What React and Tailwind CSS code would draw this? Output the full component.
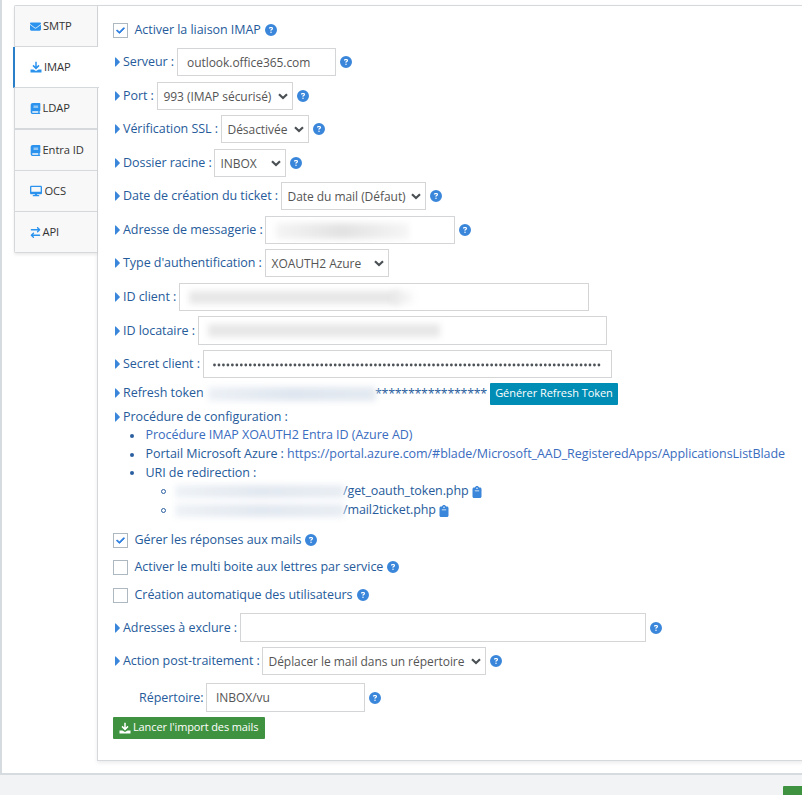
import React from "react";
import {
  FaEnvelope,
  FaBook,
  FaDesktop,
  FaArrowRightArrowLeft,
  FaCircleQuestion,
  FaClipboard,
  FaCheck,
} from "react-icons/fa6";

function DownloadIcon({ className = "" }) {
  return (
    <svg width="12" height="12" viewBox="0 0 12 12" className={`shrink-0 ${className}`}>
      <path
        d="M6 0.8 V7 M3 4.4 L6 7.4 L9 4.4"
        fill="none"
        stroke="currentColor"
        strokeWidth="1.5"
      />
      <path
        d="M0.5 8.4 H3.4 L6 10 L8.6 8.4 H11.5 V11.4 H0.5 Z"
        fill="currentColor"
      />
    </svg>
  );
}

const tabs = [
  { label: "SMTP", icon: FaEnvelope, cls: "h-[41px] border-b", gap: "gap-[2.5px]", size: 11 },
  { label: "IMAP", icon: DownloadIcon, cls: "h-[41px] border-b", gap: "gap-[2px]", size: 11, active: true },
  { label: "LDAP", icon: FaBook, cls: "h-[42px] border-b-2", gap: "gap-[2px]", size: 11 },
  { label: "Entra ID", icon: FaBook, cls: "h-[41px] border-b", gap: "gap-[2px]", size: 11 },
  { label: "OCS", icon: FaDesktop, cls: "h-[41px] border-b", gap: "gap-[3px]", size: 12 },
  { label: "API", icon: FaArrowRightArrowLeft, cls: "h-[40px]", gap: "gap-[2px]", size: 11 },
];

function Tab({ label, icon: Icon, cls, gap, size, active }) {
  return (
    <div
      className={`flex items-center border-[#d5d9dc] text-[11.2px] text-[#333] ${gap} ${cls} ${
        active
          ? "-ml-[2px] -mr-[2px] border-l-2 border-l-[#2a80c8] bg-white pl-[15px]"
          : "bg-[#f8f8f8] pl-[14.5px]"
      }`}
    >
      <Icon size={size} className="shrink-0 text-[#2b93ee]" />
      <span className="whitespace-nowrap">{label}</span>
    </div>
  );
}

function Help({ className = "ml-[3.5px]" }) {
  return <FaCircleQuestion size={12} className={`shrink-0 text-[#3a86da] ${className}`} />;
}

function Row({ className, label, labelClass, children }) {
  return (
    <div className={`flex items-center ${className}`}>
      <div className={`flex shrink-0 items-center whitespace-nowrap ${labelClass}`}>
        <svg width="10" height="10" viewBox="0 0 10 10" className="shrink-0 text-[#3a86da]">
          <path d="M2 0.5 H2.8 L6.6 4.5 V5.5 L2.8 9.5 H2 Z" fill="currentColor" />
        </svg>
        <span className="pt-px">{label}</span>
      </div>
      {children}
    </div>
  );
}

function Field({ className, children }) {
  return (
    <div
      className={`flex h-full shrink-0 items-center overflow-hidden whitespace-nowrap border border-[#d3d5d7] bg-white pl-[9px] pt-px text-[12px] text-[#555] ${className}`}
    >
      {children}
    </div>
  );
}

function Select({ className, children }) {
  return (
    <div
      className={`flex h-full shrink-0 items-center justify-between whitespace-nowrap border border-[#d3d5d7] bg-white pl-[5.5px] pr-[4px] text-[12px] text-[#555] ${className}`}
    >
      <span className="pt-[2px]">{children}</span>
      <svg width="10" height="7" viewBox="0 0 10 7" fill="none" className="shrink-0">
        <path d="M1 1.2 L5 5 L9 1.2" stroke="#4b5054" strokeWidth="2.2" />
      </svg>
    </div>
  );
}

function Check({ className, checked, label }) {
  return (
    <div className={`flex h-[15px] items-center ${className}`}>
      <div className="mr-[6.5px] flex size-[15px] shrink-0 items-center justify-center border border-[#adb8c0] bg-white">
        {checked && <FaCheck size={9} strokeWidth={50} stroke="currentColor" className="text-[#2f80e0]" />}
      </div>
      <span className="whitespace-nowrap">{label}</span>
      <Help className="mb-[2px] ml-[4px]" />
    </div>
  );
}

function Smudge({ className }) {
  return <div className={`shrink-0 blur-[3px] ${className}`} />;
}

function Dot() {
  return <span className="mr-[11.5px] size-[4px] shrink-0 rounded-full bg-[#2a5fa0]" />;
}

function Redirect({ path }) {
  return (
    <div className="flex h-[19px] items-center">
      <span className="mr-[9px] size-[5px] shrink-0 rounded-full border border-[#2a5fa0]" />
      <Smudge className="-mr-px h-[13px] w-[169px] bg-linear-to-r from-[#eef2f6] via-[#e2e8f0] to-[#e8edf3]" />
      <span>{path}</span>
      <FaClipboard size={12} className="ml-[2px] text-[#3a86da]" />
    </div>
  );
}

export default function App() {
  return (
    <div className="flex h-[795px] w-[802px] flex-col overflow-hidden bg-[#f1f3f5] font-['Open_Sans',sans-serif] text-[12.5px] tracking-[-0.05px] text-[#265b9b]">
      <div className="flex h-[775px] shrink-0 border-b-2 border-l-2 border-[#d5dbdf] bg-white pl-[12px] pt-[5px]">
        <nav className="z-10 h-[248px] w-[83px] shrink-0 rounded-l-[2px] border border-r-0 border-[#d5d9dc] tracking-[-0.1px] shadow-[0_2px_3px_rgba(0,0,0,0.08)]">
          {tabs.map((t) => (
            <Tab key={t.label} {...t} />
          ))}
        </nav>

        <main className="-mr-[10px] flex h-[756px] w-[720px] shrink-0 flex-col border border-[#d5d9dc] bg-white pl-[15px] shadow-[0_2px_4px_rgba(0,0,0,0.08)]">
          <Check className="mt-[17px]" checked label="Activer la liaison IMAP" />

          <Row className="mt-[10px] h-[28px]" label="Serveur :" labelClass="w-[64px]">
            <Field className="w-[159px]">outlook.office365.com</Field>
            <Help />
          </Row>
          <Row className="mt-[6px] h-[28px]" label="Port :" labelClass="w-[44px]">
            <Select className="w-[136px]">993 (IMAP sécurisé)</Select>
            <Help />
          </Row>
          <Row className="mt-[5px] h-[28px]" label="Vérification SSL :" labelClass="w-[108px]">
            <Select className="w-[88px]">Désactivée</Select>
            <Help />
          </Row>
          <Row className="mt-[6px] h-[28px]" label="Dossier racine :" labelClass="w-[101px]">
            <Select className="w-[72px]">INBOX</Select>
            <Help />
          </Row>
          <Row className="mt-[5px] h-[28px]" label="Date de création du ticket :" labelClass="w-[168px]">
            <Select className="w-[145px]">Date du mail (Défaut)</Select>
            <Help />
          </Row>
          <Row className="mt-[6px] h-[28px]" label="Adresse de messagerie :" labelClass="w-[152px]">
            <Field className="w-[190px]">
              <Smudge className="h-[16px] w-[134px] bg-linear-to-r from-[#f5f5f5] via-[#e2e2e2] to-[#f6f6f6]" />
            </Field>
            <Help />
          </Row>
          <Row className="mt-[5px] h-[28px]" label="Type d'authentification :" labelClass="w-[152px]">
            <Select className="w-[124px]">XOAUTH2 Azure</Select>
          </Row>
          <Row className="mt-[6px] h-[28px]" label="ID client :" labelClass="w-[66px]">
            <Field className="w-[410px]">
              <Smudge className="h-[13px] w-[210px] bg-[#e7e7e8]" />
              <Smudge className="-ml-[6px] h-[13px] w-[24px] bg-linear-to-r from-[#e7e7e8] to-white" />
            </Field>
          </Row>
          <Row className="mt-[5px] h-[29px]" label="ID locataire :" labelClass="w-[85px]">
            <Field className="w-[409px] pb-[2px]">
              <Smudge className="h-[13px] w-[232px] bg-[#e7e7e8]" />
            </Field>
          </Row>
          <Row className="mt-[5px] h-[28px]" label="Secret client :" labelClass="w-[90px]">
            <Field className="w-[409px] pr-[9px]">
              <svg width="390" height="4" className="shrink-0">
                <line x1="1.5" y1="2" x2="390" y2="2" stroke="#4d5358" strokeWidth="2.8" strokeLinecap="round" strokeDasharray="0 4.47" />
              </svg>
            </Field>
          </Row>

          <Row className="mt-[5px] h-[22px]" label="Refresh token" labelClass="w-[95px] relative -top-px">
            <Smudge className="-mr-px h-[14px] w-[168px] bg-linear-to-r from-[#edf1f6] via-[#dfe6ef] to-[#e4eaf1]" />
            <span className="w-[115px] shrink-0 whitespace-nowrap tracking-[-0.3px]">*****************</span>
            <div className="flex h-[22px] w-[128px] items-center justify-center whitespace-nowrap rounded-[1px] bg-[#008db5] pb-px text-[11px] text-white">
              Générer Refresh Token
            </div>
          </Row>

          <Row className="mt-[3px] h-[18px]" label="Procédure de configuration :" labelClass="" />
          <div className="flex flex-col pl-[17px]">
            <div className="flex h-[19px] items-center whitespace-nowrap text-[#3a6cc0]">
              <Dot />
              <span>Procédure IMAP XOAUTH2 Entra ID (Azure AD)</span>
            </div>
            <div className="flex h-[19px] items-center whitespace-nowrap">
              <Dot />
              <span>
                Portail Microsoft Azure :{" "}
                <span className="text-[#3a6cc0]">
                  https://portal.azure.com/#blade/Microsoft_AAD_RegisteredApps/ApplicationsListBlade
                </span>
              </span>
            </div>
            <div className="flex h-[18px] items-center">
              <Dot />
              <span>URI de redirection :</span>
            </div>
          </div>
          <div className="flex flex-col pl-[48px] tracking-[-0.1px]">
            <Redirect path="/get_oauth_token.php" />
            <Redirect path="/mail2ticket.php" />
          </div>

          <Check className="mt-[13px]" checked label="Gérer les réponses aux mails" />
          <Check className="mt-[12px]" label="Activer le multi boite aux lettres par service" />
          <Check className="mt-[13px]" label="Création automatique des utilisateurs" />

          <Row className="mt-[10px] h-[29px]" label="Adresses à exclure :" labelClass="w-[127px]">
            <Field className="w-[406px]" />
            <Help />
          </Row>
          <Row className="mt-[5px] h-[28px]" label="Action post-traitement :" labelClass="w-[149px]">
            <Select className="w-[224px]">Déplacer le mail dans un répertoire</Select>
            <Help />
          </Row>
          <div className="mt-[8px] flex h-[29px] items-center pl-[26px]">
            <span className="w-[67px] shrink-0 pt-px">Répertoire:</span>
            <Field className="w-[159px]">INBOX/vu</Field>
            <Help />
          </div>
          <div className="mt-[5px] flex h-[22px] w-[152px] shrink-0 items-center gap-[2px] whitespace-nowrap rounded-[1px] bg-[#3f9240] pb-px pl-[6px] text-[11px] tracking-[-0.12px] text-white">
            <DownloadIcon />
            <span>Lancer l'import des mails</span>
          </div>
        </main>
      </div>
      <div className="ml-[783px] mt-[11px] h-[20px] w-[40px] shrink-0 rounded-tl-[1px] bg-[#3f9240]" />
    </div>
  );
}
